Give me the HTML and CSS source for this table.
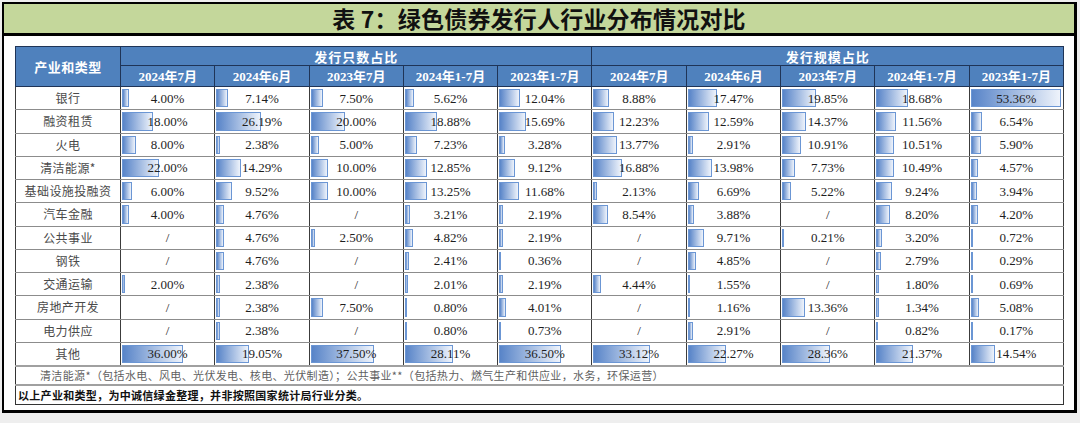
FILE: index.html
```html
<!DOCTYPE html>
<html lang="zh">
<head>
<meta charset="utf-8">
<title>表 7：绿色债券发行人行业分布情况对比</title>
<link rel="stylesheet" href="styles.css">
</head>
<body>
<div class="frame">
  <div class="title">表 7：绿色债券发行人行业分布情况对比</div>
  <div class="content">
    <table class="grid">
      <colgroup>
        <col class="c-label"><col><col><col><col><col><col><col><col><col><col>
      </colgroup>
      <thead>
        <tr class="h1">
          <th rowspan="2" class="h-label">产业和类型</th>
          <th colspan="5" class="h-group">发行只数占比</th>
          <th colspan="5" class="h-group">发行规模占比</th>
        </tr>
        <tr class="h2">
          <th>2024年7月</th><th>2024年6月</th><th>2023年7月</th><th>2024年1-7月</th><th>2023年1-7月</th>
          <th>2024年7月</th><th>2024年6月</th><th>2023年7月</th><th>2024年1-7月</th><th>2023年1-7月</th>
        </tr>
      </thead>
      <tbody>
        <tr class="row">
          <td class="label">银行</td>
          <td><i class="bar" style="width:6.8px"></i><span>4.00%</span></td>
          <td><i class="bar" style="width:12.1px"></i><span>7.14%</span></td>
          <td><i class="bar" style="width:12.8px"></i><span>7.50%</span></td>
          <td><i class="bar" style="width:9.6px"></i><span>5.62%</span></td>
          <td><i class="bar" style="width:20.5px"></i><span>12.04%</span></td>
          <td><i class="bar" style="width:15.1px"></i><span>8.88%</span></td>
          <td><i class="bar" style="width:29.7px"></i><span>17.47%</span></td>
          <td><i class="bar" style="width:33.7px"></i><span>19.85%</span></td>
          <td><i class="bar" style="width:31.8px"></i><span>18.68%</span></td>
          <td><i class="bar" style="width:90.7px"></i><span>53.36%</span></td>
        </tr>
        <tr class="row">
          <td class="label">融资租赁</td>
          <td><i class="bar" style="width:30.6px"></i><span>18.00%</span></td>
          <td><i class="bar" style="width:44.5px"></i><span>26.19%</span></td>
          <td><i class="bar" style="width:34px"></i><span>20.00%</span></td>
          <td><i class="bar" style="width:32.1px"></i><span>18.88%</span></td>
          <td><i class="bar" style="width:26.7px"></i><span>15.69%</span></td>
          <td><i class="bar" style="width:20.8px"></i><span>12.23%</span></td>
          <td><i class="bar" style="width:21.4px"></i><span>12.59%</span></td>
          <td><i class="bar" style="width:24.4px"></i><span>14.37%</span></td>
          <td><i class="bar" style="width:19.7px"></i><span>11.56%</span></td>
          <td><i class="bar" style="width:11.1px"></i><span>6.54%</span></td>
        </tr>
        <tr class="row">
          <td class="label">火电</td>
          <td><i class="bar" style="width:13.6px"></i><span>8.00%</span></td>
          <td><i class="bar" style="width:4px"></i><span>2.38%</span></td>
          <td><i class="bar" style="width:8.5px"></i><span>5.00%</span></td>
          <td><i class="bar" style="width:12.3px"></i><span>7.23%</span></td>
          <td><i class="bar" style="width:5.6px"></i><span>3.28%</span></td>
          <td><i class="bar" style="width:23.4px"></i><span>13.77%</span></td>
          <td><i class="bar" style="width:4.9px"></i><span>2.91%</span></td>
          <td><i class="bar" style="width:18.5px"></i><span>10.91%</span></td>
          <td><i class="bar" style="width:17.9px"></i><span>10.51%</span></td>
          <td><i class="bar" style="width:10px"></i><span>5.90%</span></td>
        </tr>
        <tr class="row">
          <td class="label">清洁能源*</td>
          <td><i class="bar" style="width:37.4px"></i><span>22.00%</span></td>
          <td><i class="bar" style="width:24.3px"></i><span>14.29%</span></td>
          <td><i class="bar" style="width:17px"></i><span>10.00%</span></td>
          <td><i class="bar" style="width:21.8px"></i><span>12.85%</span></td>
          <td><i class="bar" style="width:15.5px"></i><span>9.12%</span></td>
          <td><i class="bar" style="width:28.7px"></i><span>16.88%</span></td>
          <td><i class="bar" style="width:23.8px"></i><span>13.98%</span></td>
          <td><i class="bar" style="width:13.1px"></i><span>7.73%</span></td>
          <td><i class="bar" style="width:17.8px"></i><span>10.49%</span></td>
          <td><i class="bar" style="width:7.8px"></i><span>4.57%</span></td>
        </tr>
        <tr class="row">
          <td class="label">基础设施投融资</td>
          <td><i class="bar" style="width:10.2px"></i><span>6.00%</span></td>
          <td><i class="bar" style="width:16.2px"></i><span>9.52%</span></td>
          <td><i class="bar" style="width:17px"></i><span>10.00%</span></td>
          <td><i class="bar" style="width:22.5px"></i><span>13.25%</span></td>
          <td><i class="bar" style="width:19.9px"></i><span>11.68%</span></td>
          <td><i class="bar" style="width:3.6px"></i><span>2.13%</span></td>
          <td><i class="bar" style="width:11.4px"></i><span>6.69%</span></td>
          <td><i class="bar" style="width:8.9px"></i><span>5.22%</span></td>
          <td><i class="bar" style="width:15.7px"></i><span>9.24%</span></td>
          <td><i class="bar" style="width:6.7px"></i><span>3.94%</span></td>
        </tr>
        <tr class="row">
          <td class="label">汽车金融</td>
          <td><i class="bar" style="width:6.8px"></i><span>4.00%</span></td>
          <td><i class="bar" style="width:8.1px"></i><span>4.76%</span></td>
          <td><span>/</span></td>
          <td><i class="bar" style="width:5.5px"></i><span>3.21%</span></td>
          <td><i class="bar" style="width:3.7px"></i><span>2.19%</span></td>
          <td><i class="bar" style="width:14.5px"></i><span>8.54%</span></td>
          <td><i class="bar" style="width:6.6px"></i><span>3.88%</span></td>
          <td><span>/</span></td>
          <td><i class="bar" style="width:13.9px"></i><span>8.20%</span></td>
          <td><i class="bar" style="width:7.1px"></i><span>4.20%</span></td>
        </tr>
        <tr class="row">
          <td class="label">公共事业</td>
          <td><span>/</span></td>
          <td><i class="bar" style="width:8.1px"></i><span>4.76%</span></td>
          <td><i class="bar" style="width:4.3px"></i><span>2.50%</span></td>
          <td><i class="bar" style="width:8.2px"></i><span>4.82%</span></td>
          <td><i class="bar" style="width:3.7px"></i><span>2.19%</span></td>
          <td><span>/</span></td>
          <td><i class="bar" style="width:16.5px"></i><span>9.71%</span></td>
          <td><i class="bar" style="width:0.4px"></i><span>0.21%</span></td>
          <td><i class="bar" style="width:5.4px"></i><span>3.20%</span></td>
          <td><i class="bar" style="width:1.2px"></i><span>0.72%</span></td>
        </tr>
        <tr class="row">
          <td class="label">钢铁</td>
          <td><span>/</span></td>
          <td><i class="bar" style="width:8.1px"></i><span>4.76%</span></td>
          <td><span>/</span></td>
          <td><i class="bar" style="width:4.1px"></i><span>2.41%</span></td>
          <td><i class="bar" style="width:0.6px"></i><span>0.36%</span></td>
          <td><span>/</span></td>
          <td><i class="bar" style="width:8.2px"></i><span>4.85%</span></td>
          <td><span>/</span></td>
          <td><i class="bar" style="width:4.7px"></i><span>2.79%</span></td>
          <td><i class="bar" style="width:0.5px"></i><span>0.29%</span></td>
        </tr>
        <tr class="row">
          <td class="label">交通运输</td>
          <td><i class="bar" style="width:3.4px"></i><span>2.00%</span></td>
          <td><i class="bar" style="width:4px"></i><span>2.38%</span></td>
          <td><span>/</span></td>
          <td><i class="bar" style="width:3.4px"></i><span>2.01%</span></td>
          <td><i class="bar" style="width:3.7px"></i><span>2.19%</span></td>
          <td><i class="bar" style="width:7.5px"></i><span>4.44%</span></td>
          <td><i class="bar" style="width:2.6px"></i><span>1.55%</span></td>
          <td><span>/</span></td>
          <td><i class="bar" style="width:3.1px"></i><span>1.80%</span></td>
          <td><i class="bar" style="width:1.2px"></i><span>0.69%</span></td>
        </tr>
        <tr class="row">
          <td class="label">房地产开发</td>
          <td><span>/</span></td>
          <td><i class="bar" style="width:4px"></i><span>2.38%</span></td>
          <td><i class="bar" style="width:12.8px"></i><span>7.50%</span></td>
          <td><i class="bar" style="width:1.4px"></i><span>0.80%</span></td>
          <td><i class="bar" style="width:6.8px"></i><span>4.01%</span></td>
          <td><span>/</span></td>
          <td><i class="bar" style="width:2px"></i><span>1.16%</span></td>
          <td><i class="bar" style="width:22.7px"></i><span>13.36%</span></td>
          <td><i class="bar" style="width:2.3px"></i><span>1.34%</span></td>
          <td><i class="bar" style="width:8.6px"></i><span>5.08%</span></td>
        </tr>
        <tr class="row">
          <td class="label">电力供应</td>
          <td><span>/</span></td>
          <td><i class="bar" style="width:4px"></i><span>2.38%</span></td>
          <td><span>/</span></td>
          <td><i class="bar" style="width:1.4px"></i><span>0.80%</span></td>
          <td><i class="bar" style="width:1.2px"></i><span>0.73%</span></td>
          <td><span>/</span></td>
          <td><i class="bar" style="width:4.9px"></i><span>2.91%</span></td>
          <td><span>/</span></td>
          <td><i class="bar" style="width:1.4px"></i><span>0.82%</span></td>
          <td><i class="bar" style="width:0.3px"></i><span>0.17%</span></td>
        </tr>
        <tr class="row">
          <td class="label">其他</td>
          <td><i class="bar" style="width:61.2px"></i><span>36.00%</span></td>
          <td><i class="bar" style="width:32.4px"></i><span>19.05%</span></td>
          <td><i class="bar" style="width:63.8px"></i><span>37.50%</span></td>
          <td><i class="bar" style="width:47.8px"></i><span>28.11%</span></td>
          <td><i class="bar" style="width:62.1px"></i><span>36.50%</span></td>
          <td><i class="bar" style="width:56.3px"></i><span>33.12%</span></td>
          <td><i class="bar" style="width:37.9px"></i><span>22.27%</span></td>
          <td><i class="bar" style="width:48.2px"></i><span>28.36%</span></td>
          <td><i class="bar" style="width:36.3px"></i><span>21.37%</span></td>
          <td><i class="bar" style="width:24.7px"></i><span>14.54%</span></td>
        </tr>
        <tr class="note">
          <td colspan="11">清洁能源*（包括水电、风电、光伏发电、核电、光伏制造）；公共事业**（包括热力、燃气生产和供应业，水务，环保运营）</td>
        </tr>
        <tr class="source">
          <td colspan="11">以上产业和类型，为中诚信绿金整理，并非按照国家统计局行业分类。</td>
        </tr>
      </tbody>
    </table>
  </div>
</div>
</body>
</html>
```

FILE: styles.css
```css
html, body {
  margin: 0;
  padding: 0;
}

body {
  background: #eeeeee;
  font-family: "Liberation Serif", "Noto Sans CJK SC", serif;
  color: #222222;
}

.frame {
  margin: 2px 3px 0 2px;
  border: 2px solid #000000;
  border-right-width: 3px;
  border-bottom-width: 3px;
  background: #ffffff;
}

.title {
  height: 29px;
  line-height: 29px;
  background: #c4d79b;
  border-bottom: 3px solid #000000;
  text-align: center;
  font-family: "Noto Sans CJK SC", "Liberation Sans", sans-serif;
  font-weight: bold;
  font-size: 23px;
  color: #111111;
  letter-spacing: 0.2px;
}

.content {
  padding: 10px 10px 5px 11px;
}

.grid {
  width: 1049px;
  table-layout: fixed;
  border-collapse: collapse;
  border: 1px solid #333333;
}

.c-label {
  width: 105px;
}

.grid th {
  background: #4f81bd;
  color: #ffffff;
  font-weight: bold;
  border: 1px solid #1f3457;
  padding: 0;
  text-align: center;
  vertical-align: middle;
  line-height: 1;
}

.h1 th {
  height: 18px;
}

.h2 th {
  height: 20px;
  font-size: 13px;
  font-family: "Liberation Serif", "Noto Sans CJK SC", serif;
}

.h-label {
  font-family: "Noto Sans CJK SC", sans-serif;
  font-size: 13px;
  letter-spacing: 0.5px;
}

.h-group {
  font-family: "Noto Sans CJK SC", sans-serif;
  font-size: 13px;
  letter-spacing: 1px;
}

.row td {
  position: relative;
  height: 22.25px;
  padding: 0;
  text-align: center;
  vertical-align: middle;
  font-size: 13px;
  line-height: 1;
  color: #1e1e1e;
  border-top: 1px solid #8c8c8c;
  border-bottom: 1px solid #8c8c8c;
  border-left: 1px solid #3c3c3c;
  border-right: 1px solid #3c3c3c;
}

.row td span {
  position: relative;
}

.row td.label {
  font-family: "Noto Sans CJK SC", sans-serif;
  font-size: 12px;
  letter-spacing: 0.4px;
  color: #4a4a4a;
}

.bar {
  position: absolute;
  left: 1px;
  top: 2px;
  bottom: 2px;
  min-width: 2px;
  box-sizing: border-box;
  border: 1px solid #6b96d4;
  background: linear-gradient(to right, #5884c8, #eef3fb);
}

.note td {
  height: 17px;
  padding: 0 0 0 24px;
  text-align: left;
  vertical-align: middle;
  font-family: "Noto Sans CJK SC", sans-serif;
  font-size: 11px;
  letter-spacing: 0.35px;
  color: #5f5f5f;
  border-top: 2px solid #a0a0a0;
  border-bottom: 2px solid #a0a0a0;
  line-height: 1;
}

.source td {
  height: 18px;
  padding: 0 0 0 2px;
  text-align: left;
  vertical-align: middle;
  font-family: "Noto Sans CJK SC", sans-serif;
  font-weight: bold;
  font-size: 11px;
  letter-spacing: 0.3px;
  color: #111111;
  line-height: 1;
}
```
